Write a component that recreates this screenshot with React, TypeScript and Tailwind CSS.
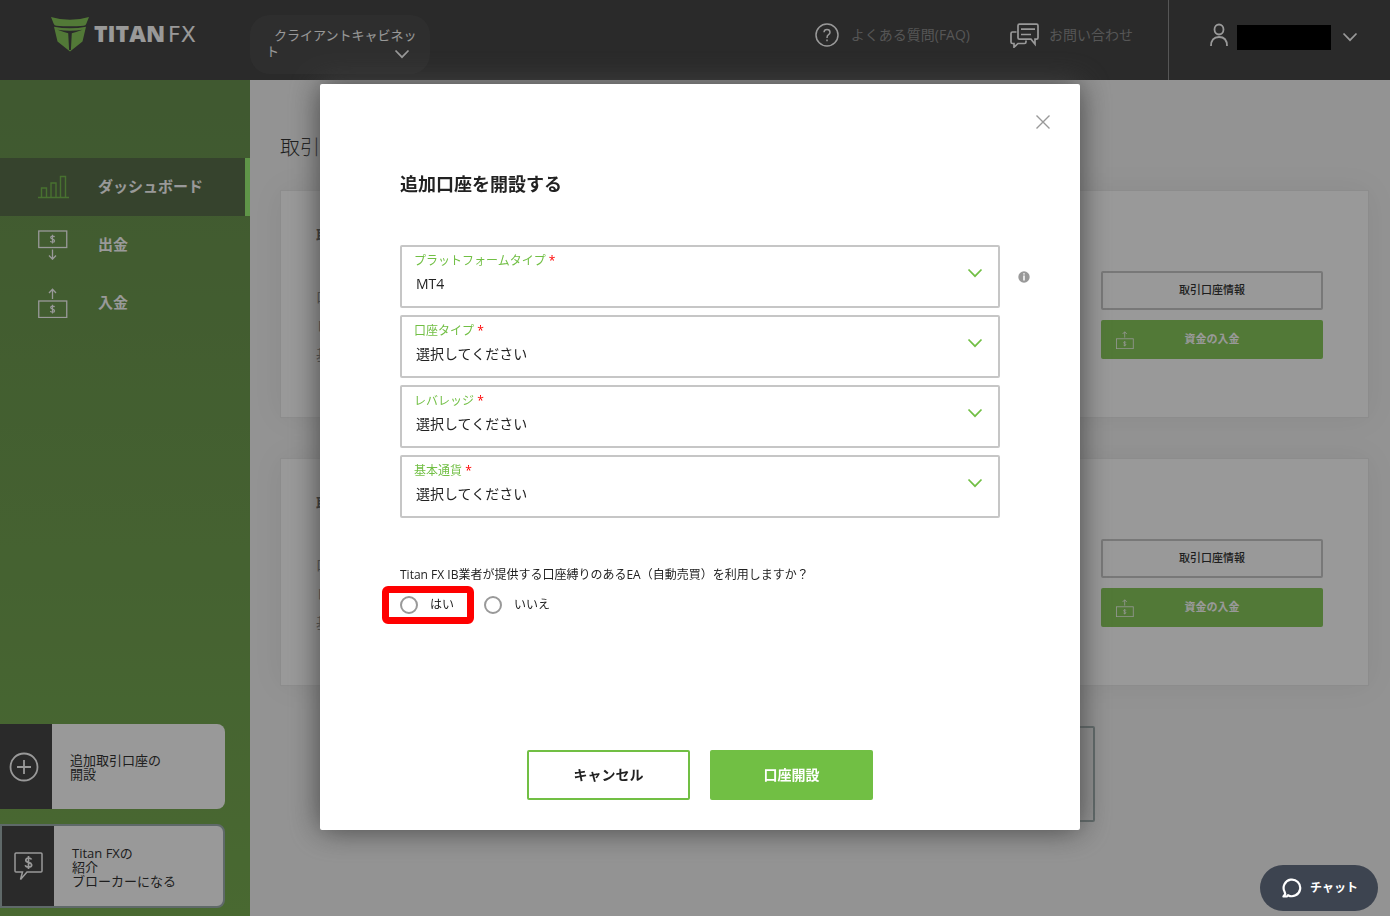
import { useState } from "react";
import type { ReactNode } from "react";

function Chevron({ className = "" }: { className?: string }) {
  return (
    <svg viewBox="0 0 16 10" aria-hidden="true" className={"h-[10px] w-4 fill-none stroke-current [stroke-width:1.700] " + className}>
      <path d="M1.500 1.500 8 8.200l6.500-6.700" />
    </svg>
  );
}

function Logo() {
  return (
    <a href="#home" className="flex items-center gap-[5px] text-white">
      <svg viewBox="0 0 38 35" className="h-[35px] w-[38px] fill-[#89ca5c]" aria-hidden="true">
        <path d="M0 0Q9 2.800 19 2.800T38 0L35.300 6.800Q34.800 8.600 32.500 8.800 19 9.800 5.500 8.800 3.300 8.600 2.700 6.800Z" />
        <path d="M3 9.800Q11 11.300 19 11.300T35 9.800L31.500 24.500 19 34.500 6.500 24.500Z" />
        <path d="M6.500 12.800Q19 14.800 31.500 12.800 25 15.300 20.800 16.200L19.900 33H18.100L17.200 16.200Q13 15.300 6.500 12.800Z" fill="#464646" />
      </svg>
      <span className="flex items-baseline gap-[3px] leading-8">
        <span className="font-['Open_Sans'] text-[23px] font-extrabold">TITAN</span>
        <span className="font-['DejaVu_Sans'] text-[22px]">FX</span>
      </span>
    </a>
  );
}

function Bill({ direction, className }: { direction: "up" | "down"; className: string }) {
  const up = direction === "up";
  return (
    <svg viewBox="0 0 30 30" aria-hidden="true" className={"shrink-0 fill-none stroke-current " + className}>
      <rect x="0.750" y={up ? 13 : 1} width="28" height="16.500" strokeWidth="1.300" />
      <path d={up ? "M14.500 11V1.500M11 5l3.500-3.700L18 5" : "M14.500 19.500V29M11 25.500l3.500 3.700 3.500-3.700"} strokeWidth="1.300" />
      <path
        transform={up ? "translate(0 12)" : undefined}
        d="M16.500 7.200Q16.300 6.200 14.500 6.200T12.700 7.600Q12.700 8.700 14.500 9.200T16.500 10.900Q16.500 12.200 14.500 12.200T12.500 11M14.500 4.800v8.800"
        strokeWidth="1.200"
      />
    </svg>
  );
}

function BarsIcon() {
  return (
    <svg viewBox="0 0 31 24" aria-hidden="true" className="h-6 w-[31px] fill-none stroke-[#79bd50] [stroke-width:1.400]">
      <path d="M0 22.500h31M3.500 22.500v-9.500h5v9.500M13 22.500v-14.500h5v14.500M22.500 22.500v-21h5v21" />
    </svg>
  );
}

function NavItem({ icon, label, active = false }: { icon: ReactNode; label: string; active?: boolean }) {
  return (
    <a
      href="#nav"
      className={
        "flex h-[58px] items-center gap-[29px] border-r-[5px] pl-[38px] text-[15px] leading-5 font-bold text-white " +
        (active ? "border-[#9ef778] bg-[#5a704b]" : "border-transparent")
      }
    >
      <span className="flex w-[31px] justify-start">{icon}</span>
      <span className="pb-0.5">{label}</span>
    </a>
  );
}

function AccountCard() {
  return (
    <section className="flex h-[228px] items-start justify-between border border-[#eaeaea] bg-white pr-[45px] pl-[35px] shadow-[0_0_30px_rgba(0,0,0,0.06)]">
      <div className="pt-[33px] text-sm leading-[22px] text-[#777777]">
        <h2 className="font-bold text-[#464646]">取引口座</h2>
        <ul className="mt-10 flex flex-col gap-[7px]">
          <li>口座タイプ</li>
          <li>レバレッジ</li>
          <li>基本通貨</li>
        </ul>
      </div>
      <div className="mt-20 flex w-[222px] flex-col gap-[10px] text-[11px]">
        <button type="button" className="h-[39px] rounded-xs border-2 border-[#c8c8c8] font-medium text-[#333333]">
          取引口座情報
        </button>
        <button type="button" className="relative h-[39px] rounded-xs bg-[#89ca5c] font-bold text-white">
          <Bill direction="up" className="absolute top-[11px] left-[15px] size-[18px]" />
          資金の入金
        </button>
      </div>
    </section>
  );
}

const fields = [
  { id: "platform", label: "プラットフォームタイプ", options: ["MT4", "MT5"] },
  { id: "account", label: "口座タイプ", options: ["選択してください"] },
  { id: "leverage", label: "レバレッジ", options: ["選択してください"] },
  { id: "currency", label: "基本通貨", options: ["選択してください"] },
];

function Field({ id, label, options }: { id: string; label: string; options: string[] }) {
  return (
    <div className="relative">
      <div className="relative h-[63px] rounded-xs border-2 border-[#c6c6c6] pt-[5px]">
        <label htmlFor={id} className="block pl-3 text-xs leading-[18px] text-[#71bf44]">
          {label} <span className="text-[#ff0000]">*</span>
        </label>
        <select id={id} className="block h-7 w-full appearance-none bg-transparent pl-[14px] text-sm text-[#222222] outline-none">
          {options.map((o) => (
            <option key={o}>{o}</option>
          ))}
        </select>
        <Chevron className="pointer-events-none absolute top-[21px] right-[15px] text-[#71bf44]" />
      </div>
      {id === "platform" && (
        <svg viewBox="0 0 12 12" role="img" aria-label="情報" className="absolute top-[26px] left-full ml-[18px] size-3">
          <circle cx="6" cy="6" r="5.700" fill="#999999" />
          <path d="M6 4.500v5M6 2.300v1.300" stroke="#ffffff" strokeWidth="1.500" />
        </svg>
      )}
    </div>
  );
}

const radioClass = "size-[18px] appearance-none rounded-full border-2 border-[#999999] checked:border-[6px] checked:border-[#71bf44]";

function Dialog() {
  const [answer, setAnswer] = useState("");
  return (
    <div className="fixed inset-0 z-10 flex items-center justify-center bg-black/40 pb-0.5 pl-[10px]">
      <form
        role="dialog"
        aria-labelledby="dialog-title"
        className="relative w-full max-w-[760px] rounded-xs bg-white px-20 pt-[86px] pb-[30px] text-[#222222] shadow-[0_0_30px_#444444]"
      >
        <button type="button" aria-label="閉じる" className="absolute top-[30px] right-[29px] p-px">
          <svg viewBox="0 0 14 14" className="size-[14px] stroke-[#999999] [stroke-width:1.400]">
            <path d="M.5.5l13 13M13.500.5l-13 13" />
          </svg>
        </button>
        <h1 id="dialog-title" className="text-lg leading-7 font-bold">
          追加口座を開設する
        </h1>
        <div className="mt-[47px] flex flex-col gap-[7px]">
          {fields.map((f) => (
            <Field key={f.id} {...f} />
          ))}
        </div>
        <fieldset className="mt-[47px] text-xs">
          <legend className="leading-5">Titan FX IB業者が提供する口座縛りのあるEA（自動売買）を利用しますか？</legend>
          <div className="flex h-5 items-center gap-[30px] pt-5 pb-[10px]">
            <label className="relative flex items-center gap-3">
              <input type="radio" name="ea" className={radioClass} checked={answer === "yes"} onChange={() => setAnswer("yes")} />
              はい
              <span className="pointer-events-none absolute -top-[10px] -right-5 -bottom-[10px] -left-[18px] rounded-md border-[7px] border-[#ff0000]" />
            </label>
            <label className="flex items-center gap-3">
              <input type="radio" name="ea" className={radioClass} checked={answer === "no"} onChange={() => setAnswer("no")} />
              いいえ
            </label>
          </div>
        </fieldset>
        <div className="mt-[135px] flex justify-center gap-5 text-sm font-bold">
          <button type="button" className="h-[50px] w-[163px] rounded-xs border-2 border-[#71bf44]">
            キャンセル
          </button>
          <button type="submit" className="h-[50px] w-[163px] rounded-xs bg-[#71bf44] text-white">
            口座開設
          </button>
        </div>
      </form>
    </div>
  );
}

export default function App() {
  return (
    <div lang="ja" className="flex min-h-screen flex-col bg-[#f5f5f5] font-['Open_Sans','Noto_Sans_CJK_JP',sans-serif]">
      <header className="flex h-20 bg-[#464646] text-white">
        <div className="flex w-[250px] shrink-0 items-center pb-3 pl-[51px]">
          <Logo />
        </div>
        <button
          type="button"
          className="relative mt-[15px] h-[59px] w-[180px] rounded-[20px] bg-[#4e4e4e] pr-2.5 pb-1 pl-4 text-left indent-2 text-[13px] leading-4"
        >
          クライアントキャビネット
          <Chevron className="absolute right-5 bottom-[15px]" />
        </button>
        <nav className="ml-auto flex items-center gap-10 pr-[35px] pb-[10px] text-sm text-[#8f8f8f]">
          <a href="#faq" className="flex items-center gap-3">
            <svg viewBox="0 0 24 24" aria-hidden="true" className="size-6 fill-none stroke-white [stroke-width:1.500]">
              <circle cx="12" cy="12" r="11" />
              <path d="M9 9.300Q9.200 6.600 12 6.600T15 9.200Q15 10.700 13.500 11.700T12 15M12 16.500v1.700" />
            </svg>
            よくある質問(FAQ)
          </a>
          <a href="#contact" className="flex items-center gap-[10px]">
            <svg viewBox="0 0 29 25" aria-hidden="true" className="h-[25px] w-[29px] fill-none stroke-white [stroke-width:1.700]">
              <path d="M9.500 1.200h17q1.500 0 1.500 1.500v12q0 1.500-1.500 1.500h-1.500v5l-4-5h-11.500q-1.500 0-1.500-1.500v-12q0-1.500 1.500-1.500zM11 6.200h14M11 11.500h10" />
              <path d="M6.500 9h-4q-1.500 0-1.500 1.500v8.500q0 1.500 1.500 1.500h1.500v3.700l4-3.700h6.500q1.500 0 1.500-1.500v-1.500" />
            </svg>
            お問い合わせ
          </a>
        </nav>
        <button type="button" aria-label="アカウント" className="flex w-[222px] items-center border-l border-[#8f8f8f] pb-[10px] pl-10">
          <svg viewBox="0 0 20 24" aria-hidden="true" className="h-6 w-5 fill-none stroke-white [stroke-width:1.800]">
            <ellipse cx="10" cy="6.500" rx="4.500" ry="5" />
            <path d="M2 23q0-9 8-9t8 9" />
          </svg>
          <span className="mt-1 ml-2 h-[25px] w-[94px] bg-black" />
          <Chevron className="mt-1 ml-[11px]" />
        </button>
      </header>

      <div className="flex flex-1">
        <aside className="flex w-[250px] shrink-0 flex-col justify-between bg-linear-to-b from-[#6b9450] to-[#7aaf53] pt-[78px] pb-2">
          <nav>
            <NavItem active icon={<BarsIcon />} label="ダッシュボード" />
            <NavItem icon={<Bill direction="down" className="size-[30px]" />} label="出金" />
            <NavItem icon={<Bill direction="up" className="size-[30px]" />} label="入金" />
          </nav>
          <div className="flex w-[225px] flex-col gap-[15px] text-[13px] leading-[14px] text-[#333333]">
            <a href="#open" className="flex h-[85px] overflow-hidden rounded-r-lg bg-white">
              <span className="flex w-[52px] items-center bg-[#464646] pl-[9px]">
                <svg viewBox="0 0 30 30" aria-hidden="true" className="size-[30px] fill-none stroke-white [stroke-width:1.800]">
                  <circle cx="15" cy="15" r="13.500" />
                  <path d="M15 8v14M8 15h14" />
                </svg>
              </span>
              <span className="self-center pl-[18px]">
                追加取引口座の
                <br />
                開設
              </span>
            </a>
            <a href="#broker" className="flex h-[84px] overflow-hidden rounded-r-lg border-2 border-[#9fafaf] bg-white">
              <span className="flex w-[52px] items-center bg-[#464646] pl-3">
                <svg viewBox="0 0 29 29" aria-hidden="true" className="size-[29px] fill-none stroke-white [stroke-width:1.500]">
                  <path d="M2 1h25q1 0 1 1v17q0 1-1 1h-14l-6.500 7.500 2-7.500h-6.500q-1 0-1-1v-17q0-1 1-1z" />
                  <path d="M17.500 7.500Q17 6 14.500 6T11.800 8.200Q11.800 9.900 14.500 10.400T17.700 12.900Q17.700 15 14.500 15T11.500 13.200M14.500 4v13" strokeWidth="1.700" />
                </svg>
              </span>
              <span className="self-center pt-px pl-[18px]">
                Titan FXの
                <br />
                紹介
                <br />
                ブローカーになる
              </span>
            </a>
          </div>
        </aside>

        <main className="flex flex-1 flex-col pt-[53px] pr-[21px] pl-[30px]">
          <h1 className="text-xl leading-[30px] font-light text-[#333333]">取引口座</h1>
          <div className="mt-[27px] flex flex-col gap-10">
            <AccountCard />
            <AccountCard />
          </div>
          <button type="button" aria-label="追加取引口座の開設" className="mt-10 h-24 w-[540px] self-center rounded-xs border-2 border-[#9fafaf]" />
        </main>
      </div>

      <Dialog />

      <button
        type="button"
        className="fixed right-3 bottom-[5px] z-20 flex h-[46px] w-[118px] items-center gap-2 rounded-full bg-[#3d4450] pl-[22px] text-xs font-bold text-white"
      >
        <svg viewBox="0 0 20 20" aria-hidden="true" className="size-5 fill-none stroke-white [stroke-width:2.200]">
          <path d="M1.500 18.500h3.300l1.200-1.300A8.300 8.300 0 1 0 2.600 13.800L3.300 16z" strokeLinejoin="round" />
        </svg>
        チャット
      </button>
    </div>
  );
}
